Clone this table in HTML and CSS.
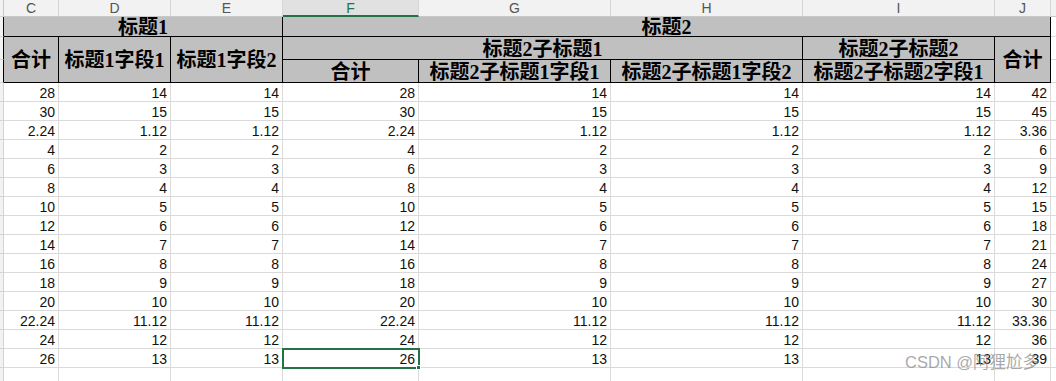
FILE: index.html
```html
<!DOCTYPE html>
<html lang="zh">
<head>
<meta charset="utf-8">
<title>Sheet</title>
<link rel="stylesheet" href="styles.css">
</head>
<body>
<div class="page">
  <div class="sheet">
    <!-- column letters -->
    <div class="ch sl"></div>
    <div class="ch">C</div>
    <div class="ch">D</div>
    <div class="ch">E</div>
    <div class="ch sel">F</div>
    <div class="ch">G</div>
    <div class="ch">H</div>
    <div class="ch">I</div>
    <div class="ch">J</div>
    <div class="ch"></div>

    <!-- header row 1 -->
    <div class="sl hsl"></div>
    <div class="h span3">标题1</div>
    <div class="h span5">标题2</div>
    <div class="k"></div>

    <!-- header row 2 -->
    <div class="sl hsl"></div>
    <div class="h rs2">合计</div>
    <div class="h rs2">标题1字段1</div>
    <div class="h rs2">标题1字段2</div>
    <div class="h span3">标题2子标题1</div>
    <div class="h">标题2子标题2</div>
    <div class="h rs2">合计</div>
    <div class="k"></div>

    <!-- header row 3 -->
    <div class="sl hsl"></div>
    <div class="h">合计</div>
    <div class="h">标题2子标题1字段1</div>
    <div class="h">标题2子标题1字段2</div>
    <div class="h">标题2子标题2字段1</div>
    <div class="k"></div>

    <!-- data -->
    <div class="sl"></div><div class="c">28</div><div class="c">14</div><div class="c">14</div><div class="c">28</div><div class="c">14</div><div class="c">14</div><div class="c">14</div><div class="c">42</div><div class="k"></div>
    <div class="sl"></div><div class="c">30</div><div class="c">15</div><div class="c">15</div><div class="c">30</div><div class="c">15</div><div class="c">15</div><div class="c">15</div><div class="c">45</div><div class="k"></div>
    <div class="sl"></div><div class="c">2.24</div><div class="c">1.12</div><div class="c">1.12</div><div class="c">2.24</div><div class="c">1.12</div><div class="c">1.12</div><div class="c">1.12</div><div class="c">3.36</div><div class="k"></div>
    <div class="sl"></div><div class="c">4</div><div class="c">2</div><div class="c">2</div><div class="c">4</div><div class="c">2</div><div class="c">2</div><div class="c">2</div><div class="c">6</div><div class="k"></div>
    <div class="sl"></div><div class="c">6</div><div class="c">3</div><div class="c">3</div><div class="c">6</div><div class="c">3</div><div class="c">3</div><div class="c">3</div><div class="c">9</div><div class="k"></div>
    <div class="sl"></div><div class="c">8</div><div class="c">4</div><div class="c">4</div><div class="c">8</div><div class="c">4</div><div class="c">4</div><div class="c">4</div><div class="c">12</div><div class="k"></div>
    <div class="sl"></div><div class="c">10</div><div class="c">5</div><div class="c">5</div><div class="c">10</div><div class="c">5</div><div class="c">5</div><div class="c">5</div><div class="c">15</div><div class="k"></div>
    <div class="sl"></div><div class="c">12</div><div class="c">6</div><div class="c">6</div><div class="c">12</div><div class="c">6</div><div class="c">6</div><div class="c">6</div><div class="c">18</div><div class="k"></div>
    <div class="sl"></div><div class="c">14</div><div class="c">7</div><div class="c">7</div><div class="c">14</div><div class="c">7</div><div class="c">7</div><div class="c">7</div><div class="c">21</div><div class="k"></div>
    <div class="sl"></div><div class="c">16</div><div class="c">8</div><div class="c">8</div><div class="c">16</div><div class="c">8</div><div class="c">8</div><div class="c">8</div><div class="c">24</div><div class="k"></div>
    <div class="sl"></div><div class="c">18</div><div class="c">9</div><div class="c">9</div><div class="c">18</div><div class="c">9</div><div class="c">9</div><div class="c">9</div><div class="c">27</div><div class="k"></div>
    <div class="sl"></div><div class="c">20</div><div class="c">10</div><div class="c">10</div><div class="c">20</div><div class="c">10</div><div class="c">10</div><div class="c">10</div><div class="c">30</div><div class="k"></div>
    <div class="sl"></div><div class="c">22.24</div><div class="c">11.12</div><div class="c">11.12</div><div class="c">22.24</div><div class="c">11.12</div><div class="c">11.12</div><div class="c">11.12</div><div class="c">33.36</div><div class="k"></div>
    <div class="sl"></div><div class="c">24</div><div class="c">12</div><div class="c">12</div><div class="c">24</div><div class="c">12</div><div class="c">12</div><div class="c">12</div><div class="c">36</div><div class="k"></div>
    <div class="sl"></div><div class="c">26</div><div class="c">13</div><div class="c">13</div><div class="c active">26</div><div class="c">13</div><div class="c">13</div><div class="c">13</div><div class="c">39</div><div class="k"></div>
    <div class="sl"></div><div class="c"></div><div class="c"></div><div class="c"></div><div class="c"></div><div class="c"></div><div class="c"></div><div class="c"></div><div class="c"></div><div class="k"></div>
  </div>
  <div class="watermark">CSDN @阿狸尬多</div>
</div>
</body>
</html>
```

FILE: styles.css
```css
html, body {
  margin: 0;
  padding: 0;
  background: #fff;
}
.page {
  position: relative;
  width: 1056px;
  height: 381px;
  overflow: hidden;
}
.sheet {
  display: grid;
  grid-template-columns: 4px 55px 112px 112px 136px 192px 192px 192px 56px 80px;
  grid-template-rows: 17px 20px 23px 23px repeat(16, 19px);
  font-family: "Liberation Sans", Arial, sans-serif;
}
.sheet > div {
  box-sizing: border-box;
  overflow: hidden;
  white-space: nowrap;
}
/* column header letters */
.ch {
  background: #f2f2f2;
  border-right: 1px solid #d6d6d6;
  border-bottom: 1px solid #c8c8c8;
  color: #555;
  font-size: 14px;
  line-height: 16px;
  text-align: center;
}
.ch.sel {
  background: #e1e1e1;
  color: #217346;
  border-bottom: 2px solid #217346;
}
.ch.sl {
  border-right: 1px solid #c8c8c8;
}
/* row-header sliver */
.sl {
  background: #f2f2f2;
  border-right: 1px solid #d4d4d4;
  border-bottom: 1px solid #d4d4d4;
}
.sl.hsl {
  border-right: 1px solid #000;
  border-bottom: 1px solid #d4d4d4;
}
/* header cells */
.h {
  background: #c0c0c0;
  border-right: 1px solid #000;
  border-bottom: 1px solid #000;
  display: flex;
  align-items: center;
  justify-content: center;
  padding-top: 1px;
  font-family: "Liberation Serif", "Noto Sans CJK SC", serif;
  font-weight: 700;
  font-size: 20px;
  line-height: 1;
  color: #000;
}
.span3 { grid-column: span 3; }
.span5 { grid-column: span 5; }
.rs2 { grid-row: span 2; }
/* data cells */
.c {
  border-right: 1px solid #dadada;
  border-bottom: 1px solid #dadada;
  text-align: right;
  padding: 3px 3px 0 0;
  font-size: 14px;
  line-height: 15px;
  color: #111;
}
.k {
  border-bottom: 1px solid #dadada;
}
.sheet > .active {
  position: relative;
  overflow: visible;
  outline: 2px solid #217346;
  outline-offset: -1px;
}
.active::after {
  content: "";
  position: absolute;
  right: -3px;
  bottom: -3px;
  width: 5px;
  height: 5px;
  background: #217346;
  border: 1px solid #fff;
  box-sizing: border-box;
}
.watermark {
  position: absolute;
  left: 905px;
  top: 352px;
  font-family: "Liberation Sans", "Noto Sans CJK SC", sans-serif;
  font-size: 16.5px;
  line-height: 20px;
  color: rgba(140, 140, 140, 0.75);
  white-space: nowrap;
}
```
